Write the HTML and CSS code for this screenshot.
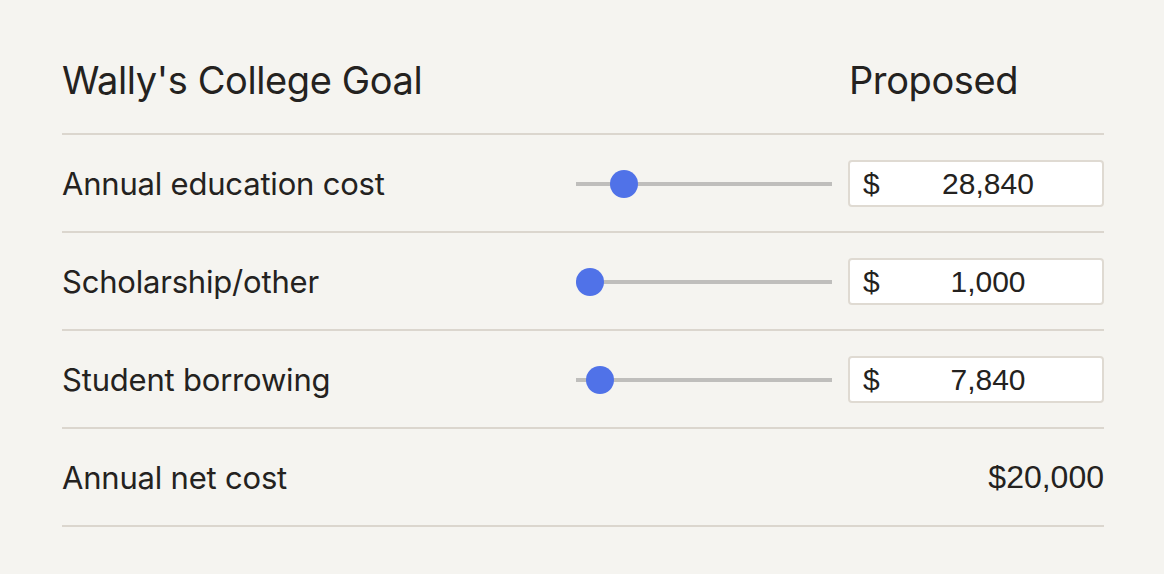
FILE: index.html
```html
<!DOCTYPE html>
<html lang="en">
<head>
<meta charset="utf-8">
<title>Wally's College Goal</title>
<link rel="stylesheet" href="styles.css">
</head>
<body>
<main class="goal">
  <header class="goal-header">
    <h1 class="goal-title">Wally's College Goal</h1>
    <h2 class="goal-col">Proposed</h2>
  </header>
  <div class="goal-row">
    <span class="row-label">Annual education cost</span>
    <input class="row-slider" type="range" min="0" max="100" step="any" value="14.9" aria-label="Annual education cost">
    <label class="money-box"><span class="money-sign">$</span><input class="money-input" type="text" value="28,840"></label>
  </div>
  <div class="goal-row">
    <span class="row-label">Scholarship/other</span>
    <input class="row-slider" type="range" min="0" max="100" step="any" value="0" aria-label="Scholarship/other">
    <label class="money-box"><span class="money-sign">$</span><input class="money-input" type="text" value="1,000"></label>
  </div>
  <div class="goal-row">
    <span class="row-label">Student borrowing</span>
    <input class="row-slider" type="range" min="0" max="100" step="any" value="4.4" aria-label="Student borrowing">
    <label class="money-box"><span class="money-sign">$</span><input class="money-input" type="text" value="7,840"></label>
  </div>
  <div class="goal-row total-row">
    <span class="row-label">Annual net cost</span>
    <span class="total-value">$20,000</span>
  </div>
</main>
</body>
</html>
```
FILE: styles.css
```css
* { box-sizing: border-box; }
html, body { margin: 0; padding: 0; }
body {
  background: #f5f4f0;
  color: #242220;
  font-family: Inter, "Noto Sans", sans-serif;
  width: 1164px;
  height: 574px;
  overflow: hidden;
}
.goal {
  width: 1042px;
  margin-left: 62px;
}
.goal-header {
  display: grid;
  grid-template-columns: 1fr 256px;
  align-items: center;
  height: 135px;
  padding-top: 26px;
  border-bottom: 2px solid #dbd6ce;
}
.goal-title, .goal-col {
  margin: 0;
  font-size: 38px;
  font-weight: 400;
  letter-spacing: -0.4px;
  line-height: 48px;
}
.goal-col { padding-left: 1px; }
.goal-row {
  display: grid;
  grid-template-columns: 1fr 256px 256px;
  column-gap: 16px;
  align-items: center;
  height: 98px;
  padding-top: 1px;
  border-bottom: 2px solid #dbd6ce;
}
.row-label {
  font-size: 31px;
  letter-spacing: -0.2px;
}
.row-slider {
  -webkit-appearance: none;
  appearance: none;
  width: 256px;
  height: 28px;
  margin: 0;
  background: transparent;
}
.row-slider::-webkit-slider-runnable-track {
  height: 4px;
  background: #bfbebc;
  border: none;
}
.row-slider::-webkit-slider-thumb {
  -webkit-appearance: none;
  appearance: none;
  width: 28px;
  height: 28px;
  border-radius: 50%;
  background: #5072e8;
  border: none;
  margin-top: -12px;
}
.money-box {
  display: flex;
  align-items: center;
  height: 47px;
  background: #fff;
  border: 2px solid #dfdad2;
  border-radius: 4px;
  padding: 0 8px 0 13px;
  font-family: "Liberation Sans", Arial, sans-serif;
  font-size: 30px;
}
.money-sign { width: 19px; }
.money-input {
  flex: 1;
  min-width: 0;
  border: none;
  outline: none;
  background: transparent;
  font: inherit;
  color: #242220;
  text-align: center;
  padding: 0;
}
.total-row { grid-template-columns: 1fr auto; }
.total-value {
  font-family: "Liberation Sans", Arial, sans-serif;
  font-size: 32px;
}
```
